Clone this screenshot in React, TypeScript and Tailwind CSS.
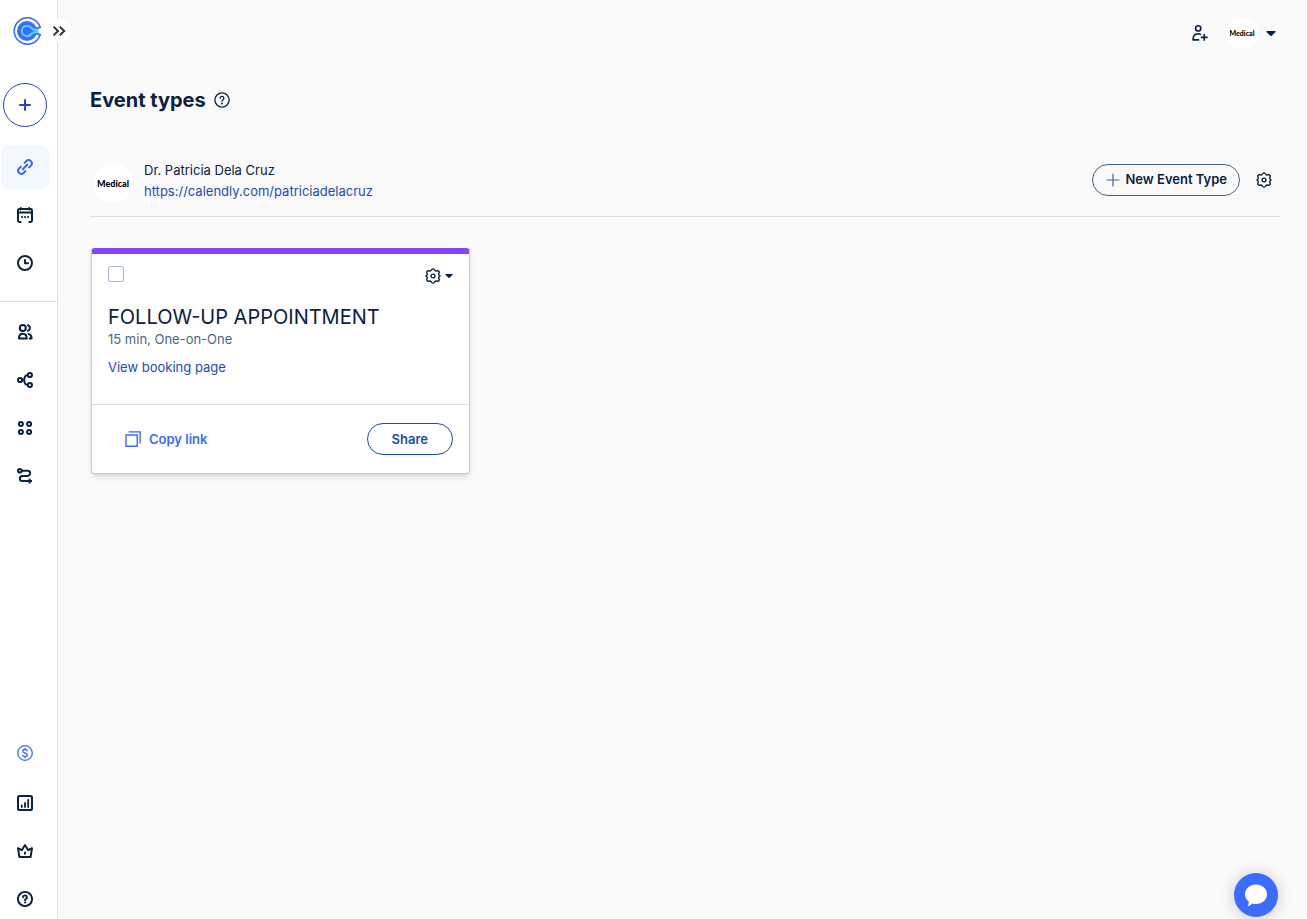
import { useState, type ReactNode } from 'react';

const PROFILE_URL = 'https://calendly.com/patriciadelacruz';

function Icon({ children, className = 'size-4' }: { children: ReactNode; className?: string }) {
  return (
    <svg
      viewBox="0 0 16 16"
      className={className}
      fill="none"
      stroke="currentColor"
      strokeWidth="2"
      strokeLinecap="round"
      strokeLinejoin="round"
      aria-hidden="true"
    >
      {children}
    </svg>
  );
}

function Logo() {
  return (
    <svg viewBox="0 0 28 28" className="size-7" fill="none" aria-hidden="true">
      <path d="M27 10A13.2 13.2 0 1 0 27 18" stroke="#3b6bff" strokeWidth="1.6" strokeLinecap="round" />
      <circle cx="14" cy="14" r="10" fill="#3b6bff" />
      <path d="M20.5 11.4Q23.5 11.6 27 10.4M20.5 16.6Q23.5 16.4 27 17.6" stroke="#3b6bff" strokeWidth="2" strokeLinecap="round" />
      <path
        d="M24.8 13C21 13.4 19.4 12.4 18 10.8C17 9.6 16 9 14.4 9H13.8A5 5 0 0 0 13.8 19H14.4C16 19 17 18.4 18 17.2C19.4 15.6 21 14.6 24.8 15"
        stroke="#4fd8f5"
        strokeWidth="2.2"
        strokeLinecap="round"
      />
    </svg>
  );
}

function GearIcon() {
  return (
    <Icon>
      <path
        d="M6.7 1.6Q8 .1 9.3 1.6L10 2.5Q10.5 3.1 11.3 3L12.5 2.8Q14.4 2.7 14.2 4.7L13.8 5.8Q13.5 6.6 14.1 7.1L14.7 7.5Q15.3 8 14.7 8.5L14.1 8.9Q13.5 9.4 13.8 10.2L14.2 11.3Q14.4 13.3 12.5 13.2L11.3 13Q10.5 12.9 10 13.5L9.3 14.4Q8 15.9 6.7 14.4L6 13.5Q5.5 12.9 4.7 13L3.5 13.2Q1.6 13.3 1.8 11.3L2.2 10.2Q2.5 9.4 1.9 8.9L1.3 8.5Q.7 8 1.3 7.5L1.9 7.1Q2.5 6.6 2.2 5.8L1.8 4.7Q1.6 2.7 3.5 2.8L4.7 3Q5.5 3.1 6 2.5z"
        strokeWidth="1.4"
      />
      <circle cx="8" cy="8" r="1.9" strokeWidth="1.4" />
    </Icon>
  );
}

function HelpIcon({ weight = '1.9' }: { weight?: string }) {
  return (
    <Icon>
      <circle cx="8" cy="8" r="7.1" strokeWidth={weight} />
      <path d="M6.1 6.3A1.9 1.9 0 1 1 8.6 8.1Q8 8.4 8 9.2" strokeWidth={weight} />
      <circle cx="8" cy="11.6" r="1" fill="currentColor" stroke="none" />
    </Icon>
  );
}

function Caret({ className }: { className: string }) {
  return (
    <svg viewBox="0 0 10 5" className={className} fill="currentColor" aria-hidden="true">
      <path d="M.8 0H9.2Q10 .4 9.5 1L5.7 4.7Q5 5.2 4.3 4.7L.5 1Q0 .4 .8 0z" />
    </svg>
  );
}

const mainNav = [
  {
    label: 'Event types',
    active: true,
    icon: (
      <Icon>
        <path d="M5.8 10.2L10.2 5.8" />
        <path d="M7.6 3.9L9.6 1.9A3.2 3.2 0 0 1 14.1 6.4L12.1 8.4" />
        <path d="M8.4 12.1L6.4 14.1A3.2 3.2 0 0 1 1.9 9.6L3.9 7.6" />
      </Icon>
    ),
  },
  {
    label: 'Scheduled events',
    icon: (
      <Icon>
        <path d="M3.6 15H2.4Q1 15 1 13.6V3.4Q1 2 2.4 2H13.6Q15 2 15 3.4V13.6Q15 15 13.6 15H12.4" />
        <path d="M1 5.6H15" />
        <path d="M3.8 1V2.4M12.2 1V2.4" />
        <path d="M4.9 10H5M8 10H8.1M11 10H11.1" />
      </Icon>
    ),
  },
  {
    label: 'Availability',
    icon: (
      <Icon>
        <circle cx="8" cy="8" r="7" />
        <path d="M8 5V8.3H11" />
      </Icon>
    ),
  },
];

const adminNav = [
  {
    label: 'Contacts',
    icon: (
      <Icon>
        <circle cx="5.8" cy="4" r="3" />
        <path d="M1.9 14.6Q1.9 9.8 5.8 9.8T9.7 14.6z" />
        <path d="M11 1.2A3 3 0 0 1 11 6.8M11.6 9.9Q14.6 10.8 14.6 14.6H12.6" />
      </Icon>
    ),
  },
  {
    label: 'Workflows',
    icon: (
      <Icon>
        <circle cx="3.1" cy="8" r="2.1" />
        <circle cx="12.9" cy="3" r="2.1" />
        <circle cx="12.9" cy="13" r="2.1" />
        <path d="M5.4 8H7M10.6 3Q7.4 3.4 7.2 8Q7.4 12.6 10.6 13" />
      </Icon>
    ),
  },
  {
    label: 'Integrations & apps',
    icon: (
      <Icon>
        <circle cx="3.9" cy="3.9" r="2" />
        <circle cx="12.1" cy="3.9" r="2" />
        <circle cx="3.9" cy="12.1" r="2" />
        <circle cx="12.1" cy="12.1" r="2" />
      </Icon>
    ),
  },
  {
    label: 'Routing',
    icon: (
      <Icon>
        <circle cx="2.8" cy="2.8" r="1.8" />
        <path d="M4.9 2.8H10.6A2.5 2.5 0 0 1 10.6 7.9H5.4A2.6 2.6 0 0 0 5.4 13.1H13.6" />
        <path d="M12.4 11L15 13.1L12.4 15.2z" fill="currentColor" strokeWidth="1" />
      </Icon>
    ),
  },
];

const footerNav = [
  {
    label: 'Analytics',
    icon: (
      <Icon>
        <rect x="1" y="1" width="14" height="14" rx="1.6" />
        <path d="M4.8 10.4V12M8 8V12M11.2 5V12" strokeWidth="1.8" />
      </Icon>
    ),
  },
  {
    label: 'Admin center',
    icon: (
      <Icon>
        <path d="M2.4 13.9L1 5.2L4.8 7.2L8 2L11.2 7.2L15 5.2L13.6 13.9z" />
        <path d="M8 9.6V10.8" />
      </Icon>
    ),
  },
  { label: 'Help', icon: <HelpIcon /> },
];

function Sidebar() {
  return (
    <aside className="sticky top-0 flex h-screen w-[58px] shrink-0 flex-col border-r border-[#d4dfea] bg-white">
      <div className="flex h-[62px] items-center pl-[13px]">
        <a href="#home" aria-label="Calendly home">
          <Logo />
        </a>
      </div>
      <button
        aria-label="Expand sidebar"
        className="absolute top-[19px] left-[47px] flex size-6 items-center justify-center rounded-full bg-white text-[#333]"
      >
        <Icon className="size-4">
          <path d="M2.6 3.6L7 8L2.6 12.4M8.8 3.6L13.2 8L8.8 12.4" strokeLinecap="butt" strokeLinejoin="miter" />
        </Icon>
      </button>

      <div className="mt-[21px] pl-[3px]">
        <button
          aria-label="Create"
          className="flex size-11 items-center justify-center rounded-full border border-[#1d4ab8] text-[#1d4ab8]"
        >
          <Icon>
            <path d="M8 3V13M3 8H13" />
          </Icon>
        </button>
      </div>

      <nav className="mt-[18px] flex flex-col gap-1 pl-px">
        {mainNav.map((item) => (
          <a
            key={item.label}
            href="#nav"
            aria-label={item.label}
            className={`flex h-11 w-12 items-center justify-center rounded-lg ${item.active ? 'bg-[#f2f8ff] text-[#3565e8]' : ''}`}
          >
            {item.icon}
          </a>
        ))}
      </nav>

      <nav className="mt-4 flex flex-col gap-1 border-t border-[#d4dfea] pt-2 pl-px">
        {adminNav.map((item) => (
          <a key={item.label} href="#nav" aria-label={item.label} className="flex h-11 w-12 items-center justify-center rounded-lg">
            {item.icon}
          </a>
        ))}
      </nav>

      <nav className="mt-auto flex flex-col gap-2 pl-px">
        <a href="#upgrade" aria-label="Upgrade plan" className="flex h-11 w-12 items-center justify-center text-[#3b6bff]">
          <Icon>
            <circle cx="8" cy="8" r="7.3" strokeWidth="1.3" />
            <path
              d="M10.3 5.7Q9.8 4.5 8 4.5Q5.8 4.5 5.8 6.2Q5.8 7.6 8 8Q10.3 8.4 10.3 9.9Q10.3 11.5 8 11.5Q6.2 11.5 5.7 10.3M8 3.2V4.5M8 11.5V12.8"
              strokeWidth="1.3"
            />
          </Icon>
        </a>
        {footerNav.map((item) => (
          <a key={item.label} href="#nav" aria-label={item.label} className="flex h-10 w-12 items-center justify-center">
            {item.icon}
          </a>
        ))}
      </nav>
    </aside>
  );
}

function Avatar({ small = false }: { small?: boolean }) {
  return (
    <span
      className={`flex shrink-0 items-center justify-center rounded-full bg-white font-[Lato] leading-none font-black text-black ${
        small ? 'size-8 text-[7px]' : 'size-10 text-[9px]'
      }`}
    >
      Medical
    </span>
  );
}

function EventCard() {
  const [checked, setChecked] = useState(false);

  return (
    <article className="w-full max-w-[379px] rounded border border-t-[6px] border-[#c9c9c9] border-t-[#8247f5] bg-white shadow-md">
      <div className="px-4 pt-3 pb-[27px]">
        <div className="flex items-start justify-between">
          <input
            type="checkbox"
            aria-label="Select FOLLOW-UP APPOINTMENT"
            checked={checked}
            onChange={(e) => setChecked(e.target.checked)}
            className="size-4 appearance-none rounded-xs border border-[#a6bbd1] bg-white checked:bg-[#3b6bff]"
          />
          <button aria-label="Event type settings" className="flex items-center gap-1 pt-0.5">
            <GearIcon />
            <Caret className="h-1 w-2" />
          </button>
        </div>
        <h2 className="mt-[21px] text-[20px] leading-6">FOLLOW-UP APPOINTMENT</h2>
        <p className="text-[13px] leading-5 text-[#476788]">15 min, One-on-One</p>
        <a href={PROFILE_URL} className="mt-2 block text-[13px] leading-5 text-[#1d4ab8]">
          View booking page
        </a>
      </div>
      <div className="flex items-center justify-between border-t border-[#d4dfea] py-[18px] pr-4 pl-[33px]">
        <button className="flex items-center gap-2 text-[13px] leading-5 font-semibold text-[#3b6bff]">
          <Icon>
            <path d="M1 4H12.2V15.2H1z" strokeWidth="1.4" strokeLinejoin="miter" />
            <path d="M3.6 .9H15.1V12.6" strokeWidth="1.4" strokeLinecap="butt" strokeLinejoin="miter" />
          </Icon>
          Copy link
        </button>
        <button className="h-8 rounded-full border border-[#1d4ab8] px-6 text-[13px] leading-5 font-semibold text-[#1d4ab8]">
          Share
        </button>
      </div>
    </article>
  );
}

export default function App() {
  return (
    <div className="flex min-h-screen bg-[#fafafa] font-[Inter,sans-serif] text-[#0b2140]">
      <Sidebar />

      <main className="flex min-w-0 flex-1 flex-col pr-[27px] pl-8">
        <header className="flex h-[66px] items-center justify-end gap-[18px]">
          <button aria-label="Invite user">
            <Icon>
              <circle cx="6.2" cy="3.4" r="2.6" strokeWidth="1.6" />
              <path d="M8.4 9.4Q7.4 8.7 6 8.7Q1 8.9 1 14.9H6.6M12.2 9.6V15.2M9.4 12.4H15" strokeWidth="1.6" />
            </Icon>
          </button>
          <button aria-label="Account menu" className="flex items-center gap-2 pr-1">
            <Avatar small />
            <Caret className="h-[5px] w-[10px]" />
          </button>
        </header>

        <div className="mt-5 flex items-center gap-2">
          <h1 className="text-[20px] leading-7 font-bold">Event types</h1>
          <button aria-label="About event types">
            <HelpIcon weight="1.3" />
          </button>
        </div>

        <section className="mt-[46px] flex items-start justify-between border-b border-[#d4dfea] pb-2.5">
          <div className="flex items-center gap-[11px] pl-[3px]">
            <Avatar />
            <div className="pb-1 text-[13px] leading-[21px]">
              <p>Dr. Patricia Dela Cruz</p>
              <a href={PROFILE_URL} className="text-[#1d4ab8]">
                {PROFILE_URL}
              </a>
            </div>
          </div>
          <div className="flex items-center gap-4 pt-1 pr-2">
            <button className="flex h-8 items-center gap-1 rounded-full border border-[#476788] px-3 text-[13px] font-semibold">
              <Icon>
                <path d="M8 2V14M2 8H14" strokeWidth="1.2" stroke="#476788" />
              </Icon>
              New Event Type
            </button>
            <button aria-label="Event type options">
              <GearIcon />
            </button>
          </div>
        </section>

        <div className="mt-[31px] pl-px">
          <EventCard />
        </div>
      </main>

      <button
        aria-label="Open chat"
        className="fixed right-[29px] bottom-0.5 flex size-11 items-center justify-center rounded-full bg-[#3b6bff] text-white shadow-[0_1px_16px_rgba(0,0,0,0.2)]"
      >
        <svg viewBox="0 0 24 24" className="size-6" fill="currentColor" aria-hidden="true">
          <path d="M12 1.5C18.2 1.5 23 5.8 23 11.3S18.2 21 12 21Q10 21 8.4 20.5Q6.6 22.6 3.6 23.6Q5 21.4 4.8 18.6Q1 15.8 1 11.3C1 5.8 5.8 1.5 12 1.5z" />
        </svg>
      </button>
    </div>
  );
}
